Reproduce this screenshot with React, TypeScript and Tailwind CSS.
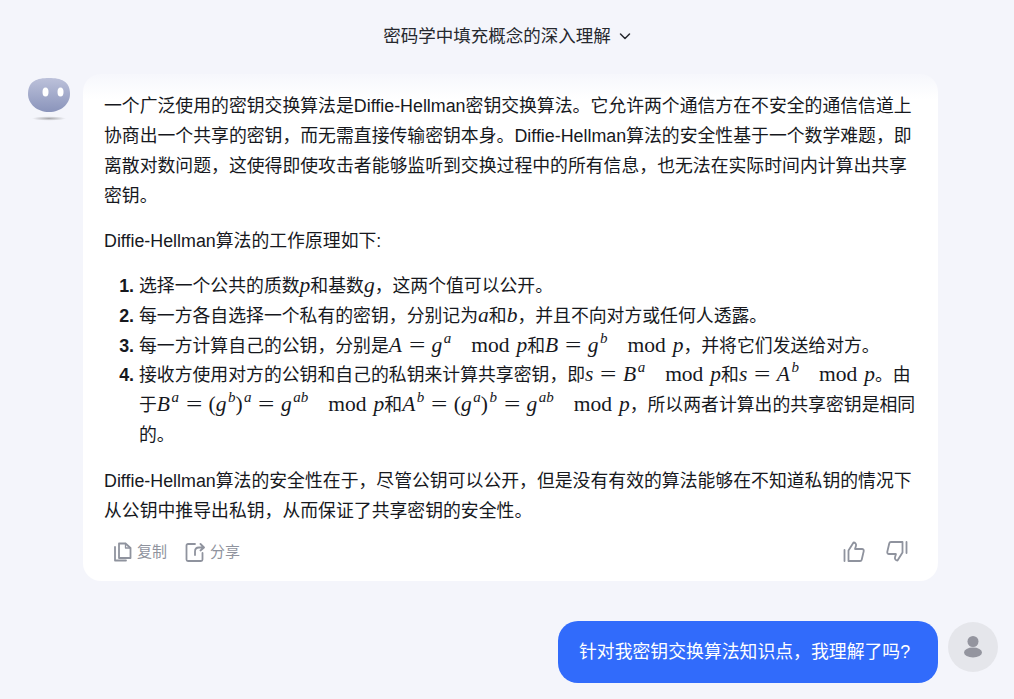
import React from "react";

const I = ({ c }: { c: string }) => (
  <span className="italic text-[21.5px] leading-none font-['Liberation_Serif',serif]">{c}</span>
);
const Sup = ({ c }: { c: string }) => (
  <sup className="italic text-[15px] leading-none align-baseline relative -top-[9px] ml-[1.500px] font-['Liberation_Serif',serif]">{c}</sup>
);
const Eq = () => (
  <span className="inline-block scale-x-[1.35] mx-[8.700px] text-[21.5px] leading-none font-['Liberation_Serif',serif]">=</span>
);
const Paren = ({ c }: { c: string }) => (
  <span className="text-[21.5px] leading-none font-['Liberation_Serif',serif]">{c}</span>
);
const Mod = () => (
  <span className="ml-[20px] mr-[7px] text-[21.5px] leading-none font-['Liberation_Serif',serif]">mod</span>
);

const Bot = () => (
  <svg width="46" height="48" viewBox="0 0 46 48" className="shrink-0">
    <defs>
      <linearGradient id="b" x1="0" y1="0" x2="0" y2="1">
        <stop offset="0" stopColor="#bcc1da" />
        <stop offset="1" stopColor="#8a94bb" />
      </linearGradient>
      <radialGradient id="s">
        <stop offset="0" stopColor="#a8a8ac" />
        <stop offset="1" stopColor="#f4f5fb" />
      </radialGradient>
    </defs>
    <path d="M23 4C11 4 2 7 2 20c0 10 9 18 21 18s21-8 21-18C44 7 35 4 23 4Z" fill="url(#b)" />
    <ellipse cx="19.500" cy="18" rx="3" ry="4.500" fill="#fff" />
    <ellipse cx="34.500" cy="18" rx="3" ry="4.500" fill="#fff" />
    <ellipse cx="23" cy="44.500" rx="17" ry="2.200" fill="url(#s)" />
  </svg>
);

const Copy = () => (
  <svg width="20" height="20" viewBox="0 0 20 20" fill="none" stroke="#8f939e" strokeWidth="1.800" strokeLinejoin="round" strokeLinecap="round">
    <path d="M6 1.500h6.500L17.500 6v10H6Z" />
    <path d="M12.500 1.500V6h5" strokeWidth="1.300" />
    <path d="M2 5v13.500h11" />
  </svg>
);
const Share = () => (
  <svg width="20" height="20" viewBox="0 0 20 20" fill="none" stroke="#8f939e" strokeWidth="1.800" strokeLinejoin="round" strokeLinecap="round">
    <path d="M10 2H3a1.500 1.500 0 0 0-1.500 1.500v14A1.500 1.500 0 0 0 3 19h13a1.500 1.500 0 0 0 1.500-1.500V11" />
    <path d="M10 13V9.500C10 7 11.500 5.500 14 5.500h4.500M15.500 2l3.500 3.500-3.500 3" />
  </svg>
);
const Thumb = ({ down }: { down?: boolean }) => (
  <svg width="22" height="21" viewBox="0 0 22 21" fill="none" stroke="#8f939e" strokeWidth="1.800" strokeLinejoin="round" strokeLinecap="round" className={down ? "rotate-180" : ""}>
    <path d="M1.500 9v11" />
    <path d="M5.500 9.500 10.500 1.500c1.800 0 3 1.500 2.500 3.200L12 8h7c1.200 0 2 1 1.700 2.200l-2 8.500c-.2.800-.8 1.300-1.600 1.300H5.500Z" />
  </svg>
);

export default function App() {
  return (
    <div className="h-[699px] overflow-hidden bg-[#f4f5fb] text-[17.850px] leading-[30px] text-[#16181d] font-['Liberation_Sans','Noto_Sans_CJK_SC',sans-serif]">
      <header className="h-[74px] flex items-start justify-center pt-[21px] text-[#26282e]">
        <span className="text-[17.500px] leading-[30px] flex items-center gap-[8px]">
          密码学中填充概念的深入理解
          <svg width="12" height="12" viewBox="0 0 12 12" fill="none" stroke="#26282e" strokeWidth="1.500" strokeLinecap="round" strokeLinejoin="round">
            <path d="M1.500 4 6 8.500 10.500 4" />
          </svg>
        </span>
      </header>

      <div className="flex pl-[26px] gap-[11px]">
        <Bot />
        <div className="w-[855px] h-[507px] rounded-[18px] bg-gradient-to-b from-[#f6f7fc] via-white via-[5%] to-white px-[21px] pt-[17px]">
          <p>一个广泛使用的密钥交换算法是Diffie-Hellman密钥交换算法。它允许两个通信方在不安全的通信信道上协商出一个共享的密钥，而无需直接传输密钥本身。Diffie-Hellman算法的安全性基于一个数学难题，即离散对数问题，这使得即使攻击者能够监听到交换过程中的所有信息，也无法在实际时间内计算出共享密钥。</p>
          <p className="mt-[15px]">Diffie-Hellman算法的工作原理如下:</p>
          <ol className="mt-[16px] pl-[35px] list-decimal marker:font-bold leading-[29.800px]">
            <li>选择一个公共的质数<I c="p" />和基数<I c="g" />，这两个值可以公开。</li>
            <li>每一方各自选择一个私有的密钥，分别记为<I c="a" />和<I c="b" />，并且不向对方或任何人透露。</li>
            <li>每一方计算自己的公钥，分别是<I c="A" /><Eq /><I c="g" /><Sup c="a" /><Mod /><I c="p" />和<I c="B" /><Eq /><I c="g" /><Sup c="b" /><Mod /><I c="p" />，并将它们发送给对方。</li>
            <li>接收方使用对方的公钥和自己的私钥来计算共享密钥，即<I c="s" /><Eq /><I c="B" /><Sup c="a" /><Mod /><I c="p" />和<I c="s" /><Eq /><I c="A" /><Sup c="b" /><Mod /><I c="p" />。由于<I c="B" /><Sup c="a" /><Eq /><Paren c="(" /><I c="g" /><Sup c="b" /><Paren c=")" /><Sup c="a" /><Eq /><I c="g" /><Sup c="ab" /><Mod /><I c="p" />和<I c="A" /><Sup c="b" /><Eq /><Paren c="(" /><I c="g" /><Sup c="a" /><Paren c=")" /><Sup c="b" /><Eq /><I c="g" /><Sup c="ab" /><Mod /><I c="p" />，所以两者计算出的共享密钥是相同的。</li>
          </ol>
          <p className="mt-[15px]">Diffie-Hellman算法的安全性在于，尽管公钥可以公开，但是没有有效的算法能够在不知道私钥的情况下从公钥中推导出私钥，从而保证了共享密钥的安全性。</p>
          <div className="mt-[14px] flex items-center justify-between pl-[9px] pr-[9px] text-[15px] text-[#8f939e] leading-[24px]">
            <div className="flex items-center gap-[18px]">
              <span className="flex items-center gap-[4px]"><Copy />复制</span>
              <span className="flex items-center gap-[5px]"><Share />分享</span>
            </div>
            <div className="flex items-center gap-[21px]">
              <Thumb />
              <Thumb down />
            </div>
          </div>
        </div>
      </div>

      <div className="mt-[40px] flex justify-end items-start gap-[10px] pr-[16px]">
        <div className="h-[62px] w-[380px] rounded-[20px] bg-[#316bfb] text-white px-[21px] flex items-center">
          针对我密钥交换算法知识点，我理解了吗?
        </div>
        <div className="mt-[1px] w-[50px] h-[50px] rounded-full bg-[#e5e6eb] flex items-center justify-center">
          <svg width="20" height="24" viewBox="0 0 20 24" fill="#94959f">
            <circle cx="10" cy="6.500" r="5.500" />
            <ellipse cx="10" cy="17.500" rx="9" ry="5" />
          </svg>
        </div>
      </div>
    </div>
  );
}
